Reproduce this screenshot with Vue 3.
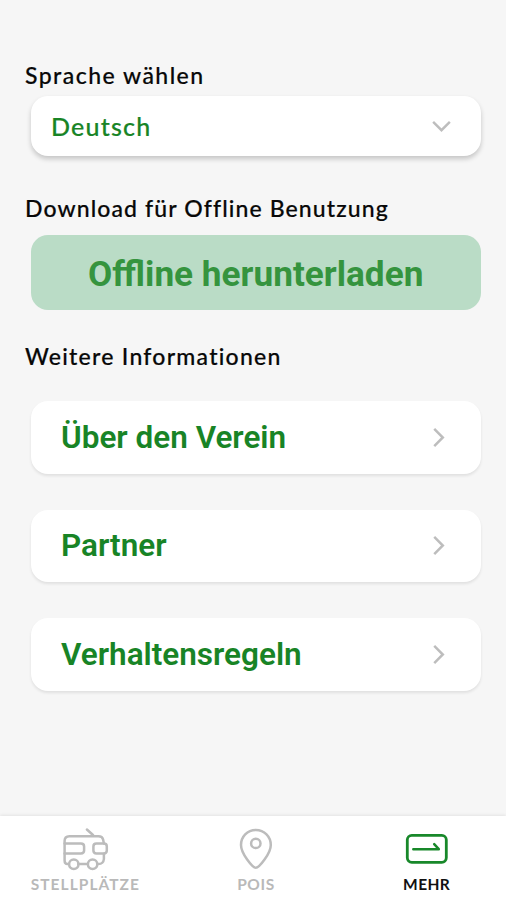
<script setup>
import { ref } from 'vue'

const links = ['Über den Verein', 'Partner', 'Verhaltensregeln']
const language = ref('Deutsch')
const active = ref('mehr')
</script>

<template>
  <div class="screen">
    <main class="content">
      <h2 class="label label-language">Sprache wählen</h2>
      <button class="select">
        <span class="select-value">{{ language }}</span>
        <svg class="chevron-down" viewBox="0 0 22 14"><path d="M2 2L11 11L20 2" /></svg>
      </button>

      <h2 class="label label-download">Download für Offline Benutzung</h2>
      <button class="download">Offline herunterladen</button>

      <h2 class="label label-info">Weitere Informationen</h2>
      <nav class="links">
        <a v-for="link in links" :key="link" class="link">
          <span>{{ link }}</span>
          <svg class="chevron-right" viewBox="0 0 14 22"><path d="M2 2L11 11L2 20" /></svg>
        </a>
      </nav>
    </main>

    <footer class="tabs">
      <a class="tab" :class="{ active: active === 'plaetze' }">
        <svg class="icon" viewBox="60.6 826 50 46">
          <path d="M69.5 864H68Q65.2 864 65.2 860.5V841Q65.2 836.2 70 836.2H99Q103 836.2 103.7 839.5L104.5 843.5M104.5 853.7V859Q104 864 99 864H97.8M78.8 864H88.3" />
          <path d="M65.2 843.6H81.5Q84.7 843.6 84.7 846.5V850.5Q84.7 853.4 81.5 853.4H65.2" />
          <path d="M104.5 843.6H97Q94 843.6 94 846.5V850.5Q94 853.4 97 853.4H104.5Q107.4 853.4 107.4 850.5V846.5Q107.4 843.6 104.5 843.6Z" />
          <circle cx="74.4" cy="864.3" r="4.7" />
          <circle cx="93.2" cy="864.3" r="4.7" />
          <path d="M87.5 829.5L93.6 835" />
        </svg>
        <span class="tab-text text-places">STELLPLÄTZE</span>
      </a>
      <a class="tab" :class="{ active: active === 'pois' }">
        <svg class="icon" viewBox="231 826 50 46">
          <path d="M255.8 867.8C252.5 867.8 241 853.5 241 845C241 836.5 247.3 830 255.8 830C264.3 830 270.8 836.5 270.8 845C270.8 853.5 259.1 867.8 255.8 867.8Z" />
          <circle cx="255.8" cy="843.4" r="4.7" />
        </svg>
        <span class="tab-text text-pois">POIS</span>
      </a>
      <a class="tab" :class="{ active: active === 'mehr' }">
        <svg class="icon icon-more" viewBox="402 826 50 46">
          <rect x="407.3" y="835.3" width="39" height="27" rx="4.5" />
          <path class="arrow" d="M413.3 849.2H438.8L434.2 844.2" />
        </svg>
        <span class="tab-text text-more">MEHR</span>
      </a>
    </footer>
  </div>
</template>

<style>
body {
  margin: 0;
  background: #f6f6f6;
}
</style>

<style scoped>
.screen {
  box-sizing: border-box;
  display: flex;
  flex-direction: column;
  width: 100%;
  height: 900px;
  background: #f6f6f6;
  overflow: hidden;
}
.content {
  flex: 1;
  display: flex;
  flex-direction: column;
  padding: 60px 25px 0 30.5px;
}
.label {
  margin: 0 0 0 -5.5px;
  height: 30px;
  font: 500 23px/30px Lato, sans-serif;
  color: #080808;
  white-space: nowrap;
  -webkit-text-stroke: 0.2px #080808;
  font-variant-ligatures: none;
}
.label-language { letter-spacing: 1.45px; }
.label-download { margin-top: 37px; letter-spacing: 1.11px; }
.label-info { margin-top: 31px; letter-spacing: 1.25px; }
button {
  border: 0;
  padding: 0;
  box-sizing: border-box;
}
.select {
  display: flex;
  align-items: center;
  justify-content: space-between;
  height: 60px;
  margin-top: 6px;
  padding: 0 29.5px 0 20.5px;
  border-radius: 17px;
  background: #fff;
  box-shadow: 0 3px 5px rgba(0, 0, 0, 0.2);
}
.select-value {
  font: 500 25px/30px Lato, sans-serif;
  letter-spacing: 1.2px;
  color: #188426;
  -webkit-text-stroke: 0.2px #188426;
}
svg {
  display: block;
  fill: none;
  stroke: #bdbdbd;
  stroke-width: 2.6;
}
.chevron-down { width: 21px; height: 13px; }
.download {
  height: 74.5px;
  margin-top: 12px;
  padding-top: 5px;
  border-radius: 17px;
  background: #badcc6;
  color: #35943e;
  font: 700 35.2px/69px Roboto, sans-serif;
  white-space: nowrap;
}
.links {
  display: flex;
  flex-direction: column;
  gap: 36px;
  margin-top: 30.5px;
}
.link {
  display: flex;
  align-items: center;
  justify-content: space-between;
  height: 72.5px;
  padding: 0 35px 0 30.5px;
  box-sizing: border-box;
  border-radius: 17px;
  background: #fff;
  box-shadow: 0 2px 3px rgba(0, 0, 0, 0.09);
  color: #188426;
  font: 600 31.5px/70px Roboto, sans-serif;
}
.link span { margin-top: 1px; }
.chevron-right { width: 14px; height: 21px; }
.tabs {
  display: grid;
  grid-template-columns: repeat(3, 170.67px);
  height: 84px;
  background: #fff;
  box-shadow: 0 -1px 3px rgba(0, 0, 0, 0.08);
}
.tab {
  display: flex;
  flex-direction: column;
  align-items: center;
  padding-top: 10px;
  color: #b9b9b9;
}
.icon {
  width: 50px;
  height: 46px;
  stroke: #bcbcbc;
  stroke-width: 2.5;
  stroke-linecap: round;
  stroke-linejoin: round;
}
.tab-text {
  height: 20px;
  margin-top: 2px;
  font: 700 15.5px/20px Lato, sans-serif;
  letter-spacing: 0.6px;
}
.text-places { letter-spacing: 1.05px; }
.text-more { letter-spacing: 0.4px; }
.active { color: #111; }
.active .icon { stroke: #18882a; stroke-width: 2.8; }
.active .arrow { stroke-width: 2.5; }
</style>
